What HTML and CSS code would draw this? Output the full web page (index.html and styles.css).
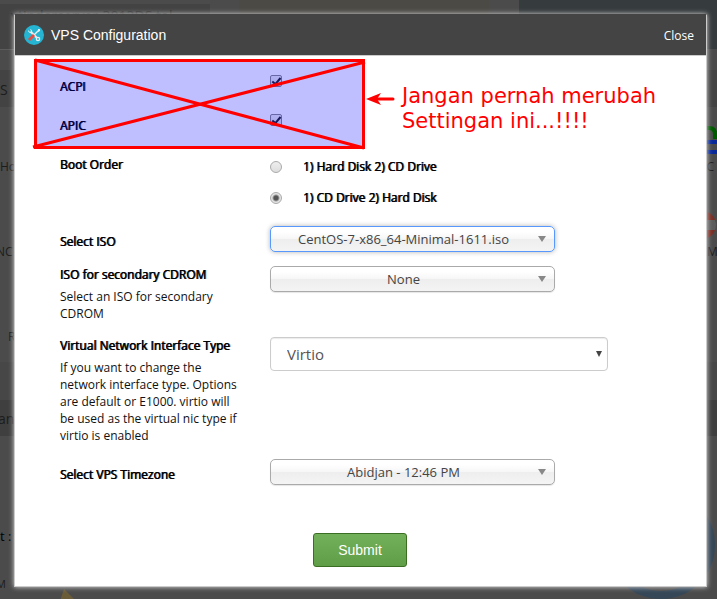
FILE: index.html
```html
<!DOCTYPE html>
<html lang="en">
<head>
  <meta charset="UTF-8">
  <meta name="viewport" content="width=device-width, initial-scale=1.0">
  <title>VPS Configuration</title>
  <link rel="stylesheet" href="styles.css">
</head>
<body>
  <!--page behind the dialog-->
  <div class="backdrop" aria-hidden="true">
    <div class="tab tab-left"></div>
    <div class="tab tab-mid"></div>
    <div class="tab tab-right"></div>
    <div class="band band-top"></div>
    <div class="band band-middle"></div>
    <div class="band band-bottom"></div>
    <span class="bg bg-host">vtinderserver-3013DS.tal</span>
    <span class="bg bg-s">S</span>
    <span class="bg bg-ho">Ho</span>
    <span class="bg bg-nc">NC</span>
    <span class="bg bg-r">R</span>
    <span class="bg bg-an">an</span>
    <span class="bg bg-t">t :</span>
    <span class="bg bg-m">M</span>
    <span class="bg bg-c">C</span>
    <span class="bg bg-mo">Mo</span>
    <svg class="logo" width="17" height="32" viewBox="0 0 17 32">
      <path d="M0 4H9Q15 4 15 10V15" fill="none" stroke="#005a00" stroke-width="4"/>
      <path d="M17 18H9Q6 18 6 20M6 26Q6 28 9 28H17" fill="none" stroke="#0b2a9a" stroke-width="4"/>
    </svg>
    <svg class="ring" width="28" height="28" viewBox="0 0 28 28">
      <circle cx="14" cy="14" r="14" fill="#7a2f25"/>
      <path d="M0 9H27Q29 14 27 19H0z" fill="#5c5c5c"/>
    </svg>
    <svg class="arrow" width="16" height="12" viewBox="0 0 16 12"><path d="M4 0L16 12H0z" fill="#6b5c38"/></svg>
    <svg class="gauge" width="110" height="110" viewBox="0 0 110 110">
      <circle cx="55" cy="55" r="50" fill="none" stroke="#364858" stroke-width="8"/>
    </svg>
  </div>

  <div class="modal" role="dialog" aria-labelledby="title">
    <header class="modal-header">
      <svg class="icon" width="20" height="20" viewBox="0 0 20 20">
        <circle cx="10" cy="10" r="10" fill="#25b5d3"/>
        <path d="M7 7L13 13" stroke="#e8eef0" stroke-width="2"/>
        <path d="M4 5L6 7L7 6L6 4A3 3 0 0 1 8 8A3 3 0 0 1 4 5z" fill="#e8eef0"/>
        <circle cx="14" cy="14" r="1.600" fill="none" stroke="#e8eef0" stroke-width="1.300"/>
        <path d="M10 10L15 5" stroke="#e8eef0" stroke-width="1.500"/>
        <path d="M14 4L16 4L16 6L14 7z" fill="#e8eef0"/>
        <path d="M5 15L10 10" stroke="#e04f46" stroke-width="3"/>
      </svg>
      <h1 id="title">VPS Configuration</h1>
      <button class="close" type="button">Close</button>
    </header>

    <form class="modal-body">
      <div class="row row-check">
        <label class="name" for="acpi">ACPI</label>
        <input type="checkbox" id="acpi" checked>
      </div>
      <div class="row row-check">
        <label class="name" for="apic">APIC</label>
        <input type="checkbox" id="apic" checked>
      </div>
      <div class="row row-boot" role="radiogroup" aria-labelledby="boot">
        <span class="name" id="boot">Boot Order</span>
        <div class="options">
          <label class="option"><input type="radio" name="boot"><span class="name">1) Hard Disk 2) CD Drive</span></label>
          <label class="option"><input type="radio" name="boot" checked><span class="name">1) CD Drive 2) Hard Disk</span></label>
        </div>
      </div>
      <div class="row row-single row-iso">
        <label class="name" for="iso">Select ISO</label>
        <div class="chosen">
          <select class="chosen-active" id="iso"><option>CentOS-7-x86_64-Minimal-1611.iso</option></select>
        </div>
      </div>
      <div class="row">
        <div class="text">
          <label class="name" for="iso2">ISO for secondary CDROM</label>
          <p class="help">Select an ISO for secondary CDROM</p>
        </div>
        <div class="chosen">
          <select id="iso2"><option>None</option></select>
        </div>
      </div>
      <div class="row">
        <div class="text">
          <label class="name" for="nic">Virtual Network Interface Type</label>
          <p class="help">If you want to change the network interface type. Options are default or E1000. virtio will be used as the virtual nic type if virtio is enabled</p>
        </div>
        <div class="plain">
          <select id="nic"><option>Virtio</option></select>
        </div>
      </div>
      <div class="row row-single">
        <label class="name" for="zone">Select VPS Timezone</label>
        <div class="chosen">
          <select id="zone"><option>Abidjan - 12:46 PM</option></select>
        </div>
      </div>
      <button class="submit" type="submit">Submit</button>

      <!--warning drawn over the first two settings-->
      <div class="warning">
        <svg width="363" height="94" viewBox="0 0 363 94">
          <rect x="3.500" y="4.500" width="328" height="87" fill="#00f" fill-opacity="0.25" stroke="#f00" stroke-width="3"/>
          <path d="M3 4L332 92M1 91L333 6" stroke="#f00" stroke-width="3"/>
          <path d="M346 43H361" stroke="#f00" stroke-width="3" stroke-linecap="round"/>
          <path d="M334 43L349 37L345 43L349 49z" fill="#f00"/>
        </svg>
        <p>Jangan pernah merubah<br>Settingan ini...!!!!</p>
      </div>
    </form>
  </div>
</body>
</html>
```

FILE: styles.css
```css
*, *::after{box-sizing: border-box;}
body{
  margin:0;
  min-height:100vh;
  display:flex;
  position:relative;
  overflow:hidden;
  background-color:#4b4b4b;
  font-family:"Open Sans", "Noto Sans", sans-serif;
  font-size:12px;
  line-height:17px;
  color:#000;
}
h1, p{margin:0;}

/*page behind the dialog*/
.backdrop{
  position:absolute;
  inset:0;
  overflow:hidden;
}
.backdrop > *{position:absolute;}
.tab{top:0; height:49px;}
.tab-left{left:0; width:210px; top:4px; height:46px; background-color:#434343; border-bottom:1px solid #5c5c5c;}
.tab-mid{left:239px; width:250px; background-color:#4c4a45;}
.tab-right{left:519px; right:0; background-color:#363b3d;}
.band{left:0; right:0; background-color:#434343;}
.band-top{top:70px; height:37px;}
.band-middle{top:362px; height:38px; background-color:#474747;}
.band-bottom{top:400px; height:36px; background-color:#3f3f3f;}
.bg{color:#1c1c1c; white-space:nowrap;}
.bg-host{left:11px; top:7px; font-size:14px; color:#2c2c2c;}
.bg-s{left:0; top:81px; font-size:14px;}
.bg-ho{left:0; top:158px;}
.bg-nc{left:-4px; top:243px;}
.bg-r{left:8px; top:328px;}
.bg-an{left:-2px; top:410px; font-size:14px;}
.bg-t{left:0; top:528px; font-size:13px; color:#000;}
.bg-m{left:-4px; top:575px; font-size:11px;}
.bg-c{right:3px; top:158px;}
.bg-mo{left:707px; top:243px;}
.logo{left:700px; top:124px;}
.ring{left:688px; top:211px;}
.arrow{left:60px; top:589px;}
.gauge{left:606px; top:490px;}

/*dialog*/
.modal{
  position:relative;
  flex:1;
  margin:14px 10px 12px 14px;
  background-color:#fff;
  border:1px solid #ccc;
  border-top-color:#444;
  box-shadow:0 0 5px #ddd;
}
.modal-header{
  display:flex;
  align-items:center;
  height:41px;
  padding:0 12px 0 9px;
  background-color:#444;
  border-bottom:1px solid #ccc;
  color:#fff;
}
.modal-header h1{
  flex:1;
  margin-left:7px;
  font:14px/20px "Liberation Sans", Arial, sans-serif;
}
.close{
  padding:0;
  border:0;
  background:none;
  color:#fff;
  font:inherit;
  cursor:pointer;
}
.modal-body{
  position:relative;
  padding:22px 46px 18px 45px;
}

/*form rows*/
.row{
  display:grid;
  grid-template-columns:180px 1fr;
  column-gap:30px;
  margin-bottom:15px;
}
.row-check{margin-bottom:22px;}
.row-boot{margin-bottom:20px;}
.row-iso{margin-bottom:14px;}
.row-single > .name{padding-top:7px;}
.name{text-shadow:0 0 0 #000, 1px 0 0 rgba(0,0,0,0.6);}
.text .name{display:block;}
.help{
  margin-top:5px;
  color:#111;
}
.options{
  display:grid;
  gap:14px;
  padding-top:2px;
}
.option{
  display:flex;
  align-items:center;
  gap:21px;
}

input{
  appearance:none;
  width:12px; height:12px;
  margin:0;
  border:1px solid #aaa;
  background:linear-gradient(#eee,#ddd);
}
input[type="checkbox"]{
  position:relative;
  border-radius:2px;
  margin-top:-3px;
  border-color:#888;
}
input[type="checkbox"]:checked::after{
  content:"";
  position:absolute;
  left:3px; top:0;
  width:5px; height:9px;
  border:solid #222;
  border-width:0 2px 2px 0;
  transform:rotate(40deg);
}
input[type="radio"]{border-radius:50%;}
input[type="radio"]:checked{
  background:radial-gradient(circle,#555 0 2px,#e4e4e4 4px);
}

select{
  appearance:none;
  display:block;
  width:100%;
  font-family:inherit;
  color:#444;
}
.chosen, .plain{
  position:relative;
  max-width:285px;
}
.chosen select{
  height:26px;
  padding:0 26px 0 8px;
  border:1px solid #aaa;
  border-radius:5px;
  background:linear-gradient(#fff 20%,#f6f6f6 50%,#eee 52%,#f4f4f4 100%);
  box-shadow:0 1px 1px rgba(0,0,0,0.1);
  font-size:13px;
  text-align-last:center;
}
.chosen .chosen-active{
  border-color:#5897fb;
  box-shadow:0 0 5px rgba(0,0,0,0.3);
}
.chosen::after, .plain::after{
  content:"";
  position:absolute;
  right:9px; top:10px;
  border:solid transparent;
  border-width:6px 4px 0;
  border-top-color:#888;
  pointer-events:none;
}
.plain{max-width:338px;}
.plain select{
  height:34px;
  padding:0 16px;
  border:1px solid #ccc;
  border-radius:4px;
  background-color:#fff;
  box-shadow:inset 0 1px 1px rgba(0,0,0,0.08);
  font-size:15px;
  color:#555;
}
.plain::after{
  right:6px; top:14px;
  border-width:6px 3px 0;
  border-top-color:#444;
}
.submit{
  display:block;
  width:94px; height:34px;
  margin:48px auto 0;
  border:1px solid #3b6e22;
  border-radius:3px;
  background:linear-gradient(#73b05a,#5f9e46);
  color:#fff;
  font:14px/20px "Liberation Sans", Arial, sans-serif;
  cursor:pointer;
}

/*warning*/
.warning{
  position:absolute;
  left:17px; top:0;
  display:flex;
  color:#f00;
  font:21px/25px "DejaVu Sans", sans-serif;
  pointer-events:none;
}
.warning p{
  margin:28px 0 0 7px;
  white-space:nowrap;
}
```
